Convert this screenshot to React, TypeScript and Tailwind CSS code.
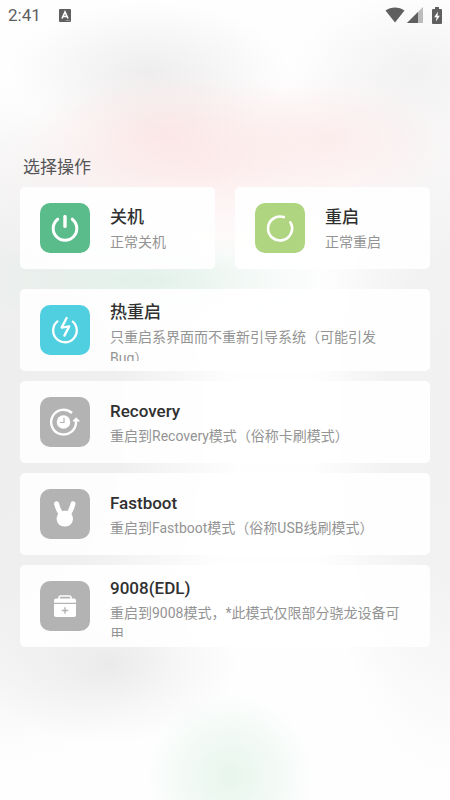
import type { ReactNode } from "react";

type Action = {
  title: string;
  description: string;
  color: string;
  icon: ReactNode;
};

function PowerIcon() {
  return (
    <svg viewBox="0 0 50 50" className="size-full" fill="none" stroke="#fff" strokeWidth="3" strokeLinecap="round">
      <path d="M17.7 16.2A11.8 11.8 0 1 0 32.3 16.2" />
      <path d="M25 13.4V23.4" strokeWidth="3.4" />
    </svg>
  );
}

function RestartIcon() {
  return (
    <svg viewBox="0 0 50 50" className="size-full" fill="none" stroke="#fff" strokeWidth="2.6" strokeLinecap="round">
      <path d="M28.8 14.1A12 12 0 1 0 35.4 19.4" />
    </svg>
  );
}

function HotRestartIcon() {
  return (
    <svg viewBox="0 0 50 50" className="size-full" fill="none" stroke="#fff" strokeWidth="2.3" strokeLinecap="round">
      <path d="M17.4 16.4A11.8 11.8 0 1 0 32.8 16.6" />
      <path d="M26.6 13L21.6 22.6L29.2 21.4L24.4 30.6" strokeLinejoin="round" />
    </svg>
  );
}

function RecoveryIcon() {
  return (
    <svg viewBox="0 0 50 50" className="size-full" fill="none" stroke="#fff" strokeWidth="2.4">
      <path d="M32 16A12.4 12.4 0 1 0 36 25V23.5" />
      <path d="M33 24L36 20.8L39.4 24Z" fill="#fff" strokeWidth="1" strokeLinejoin="round" />
      <circle cx="23.5" cy="25" r="6.8" fill="#fff" stroke="none" />
      <path d="M24 20.8V25.5H20" stroke="#b3b3b3" strokeWidth="1.2" />
    </svg>
  );
}

function FastbootIcon() {
  return (
    <svg viewBox="0 0 50 50" className="size-full" fill="#fff">
      <path
        d="M16.6 14.8Q17.6 19.5 20.8 24.5M33 14.8Q32 19.5 28.8 24.5"
        fill="none"
        stroke="#fff"
        strokeWidth="5"
        strokeLinecap="round"
      />
      <rect x="16.6" y="21.8" width="16.4" height="15.6" rx="7.6" />
    </svg>
  );
}

function EdlIcon() {
  return (
    <svg viewBox="0 0 50 50" className="size-full" fill="none">
      <path d="M19 18.5V16.8Q19 15 20.8 15H29.2Q31 15 31 16.8V18.5" stroke="#fff" strokeWidth="1.6" />
      <path d="M16 17.5H34Q36 17.5 36 19.5V21.8H14V19.5Q14 17.5 16 17.5Z" fill="#fff" />
      <path d="M14 23H36V34Q36 36 34 36H16Q14 36 14 34Z" fill="#fff" />
      <path d="M25 26.2V32.8M21.7 29.5H28.3" stroke="#b3b3b3" strokeWidth="1.4" />
    </svg>
  );
}

const QUICK_ACTIONS: Action[] = [
  { title: "关机", description: "正常关机", color: "bg-[#5abb8b]", icon: <PowerIcon /> },
  { title: "重启", description: "正常重启", color: "bg-[#afd581]", icon: <RestartIcon /> },
];

const MODE_ACTIONS: Action[] = [
  {
    title: "热重启",
    description: "只重启系界面而不重新引导系统（可能引发Bug）",
    color: "bg-[#4fcfe0]",
    icon: <HotRestartIcon />,
  },
  {
    title: "Recovery",
    description: "重启到Recovery模式（俗称卡刷模式）",
    color: "bg-[#b3b3b3]",
    icon: <RecoveryIcon />,
  },
  {
    title: "Fastboot",
    description: "重启到Fastboot模式（俗称USB线刷模式）",
    color: "bg-[#b3b3b3]",
    icon: <FastbootIcon />,
  },
  {
    title: "9008(EDL)",
    description: "重启到9008模式，*此模式仅限部分骁龙设备可用",
    color: "bg-[#b3b3b3]",
    icon: <EdlIcon />,
  },
];

function ActionCard({ action }: { action: Action }) {
  return (
    <button
      type="button"
      className="flex h-[82px] w-full items-center gap-5 rounded-[5px] bg-white/90 pr-[26px] pl-5 text-left"
    >
      <span className={`size-[50px] shrink-0 rounded-[10px] ${action.color}`}>{action.icon}</span>
      {/* Long descriptions are clipped at the card's inner edge */}
      <span className="flex max-h-[62px] min-w-0 flex-1 flex-col gap-0.5 overflow-hidden">
        <span className="shrink-0 text-[17px] leading-[26px] font-medium text-[#303030]">{action.title}</span>
        <span className="shrink-0 text-sm leading-[21px] text-[#949494]">{action.description}</span>
      </span>
    </button>
  );
}

function StatusBar() {
  return (
    <header className="flex h-[30px] items-center justify-between px-2 text-[#5f5f5f]">
      <div className="flex items-center gap-[18px]">
        <span className="text-[17px] leading-6">2:41</span>
        <svg viewBox="0 0 12 13" className="h-[13px] w-3" fill="none">
          <rect width="12" height="13" rx="1" fill="currentColor" />
          <path d="M3 9.5L6 3L9 9.5M4.2 7.5H7.8" stroke="#fff" strokeWidth="1.7" />
          <path d="M6.5 11.5H11" stroke="#aaa" strokeWidth="0.7" />
        </svg>
      </div>
      <div className="flex items-center gap-0.5">
        <svg viewBox="0 0 20 16" className="h-4 w-5" fill="currentColor">
          <path d="M0.5 3.6C6 -0.6 14 -0.6 19.5 3.6L10 15.5Z" />
        </svg>
        <svg viewBox="0 0 16 16" className="mr-[7px] h-4 w-4" fill="currentColor">
          <path d="M16 0V16H0Z" opacity="0.4" />
          <path d="M11 5V16H0Z" />
        </svg>
        <svg viewBox="0 0 10 17" className="h-[17px] w-2.5">
          <path d="M3 0H7V2H9Q10 2 10 3V16Q10 17 9 17H1Q0 17 0 16V3Q0 2 1 2H3Z" fill="currentColor" />
          <path d="M6 4.5L2.2 10.3H4.6L4 14.5L7.8 8.7H5.5Z" fill="#fff" />
        </svg>
      </div>
    </header>
  );
}

export default function App() {
  return (
    <div className="min-h-screen bg-[#fefefe] bg-[radial-gradient(ellipse_140px_75px_at_37%_17%,#f9dddd99,#f9dddd52_40%,#f9dddd17_75%,#f9dddd00),radial-gradient(ellipse_140px_70px_at_74%_17%,#fae0e073,#fae0e040_40%,#fae0e014_75%,#fae0e000),radial-gradient(ellipse_240px_90px_at_48%_21%,#fde6e699,#fde6e64d_55%,#fde6e600),radial-gradient(ellipse_190px_50px_at_32%_35%,#dff0e7e6,#dff0e74d_60%,#dff0e700),radial-gradient(ellipse_85px_85px_at_51%_97%,#e6f5ecf2,#e6f5ec80_50%,#e6f5ec00),radial-gradient(ellipse_130px_80px_at_24%_83%,#e9e9e9e6,#e9e9e966_50%,#e9e9e900),radial-gradient(ellipse_140px_70px_at_33%_9%,#ececece6,#ececec73_50%,#ececec00),radial-gradient(ellipse_120px_80px_at_92%_9%,#f0f0f0e6,#f0f0f073_50%,#f0f0f000),radial-gradient(ellipse_240px_340px_at_0%_53%,#eeeeee,#efefef_50%,#efefef00),radial-gradient(ellipse_140px_360px_at_100%_52%,#f1f1f1,#f2f2f2_45%,#f2f2f200)] font-[Roboto,'Noto_Sans_CJK_SC',sans-serif]">
      <StatusBar />
      <main className="px-5 pt-[124px] pb-10">
        <h1 className="mb-[7px] px-[3px] text-[17px] leading-[26px] text-[#555]">选择操作</h1>
        <div className="grid grid-cols-2 gap-5">
          {QUICK_ACTIONS.map((action) => (
            <ActionCard key={action.title} action={action} />
          ))}
        </div>
        <div className="mt-5 flex flex-col gap-2.5">
          {MODE_ACTIONS.map((action) => (
            <ActionCard key={action.title} action={action} />
          ))}
        </div>
      </main>
    </div>
  );
}
